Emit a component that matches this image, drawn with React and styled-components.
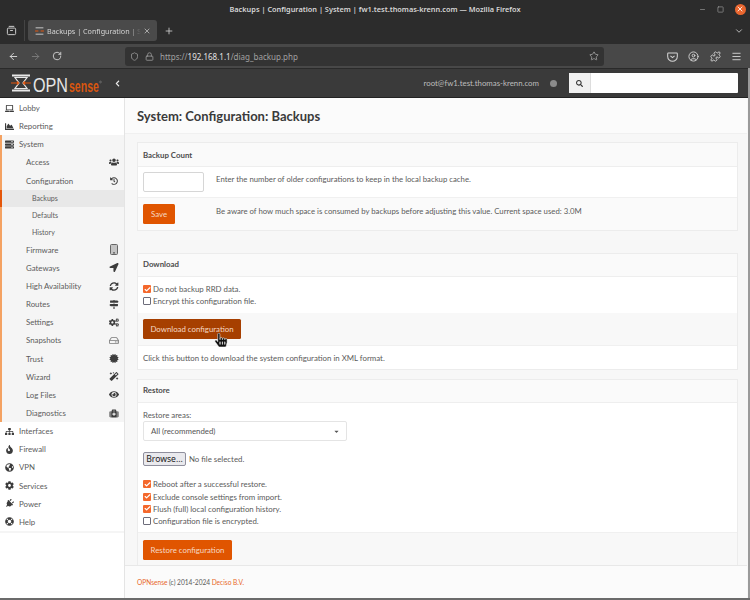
import styled, { createGlobalStyle } from "styled-components";
import {
  ArrowLeft,
  ArrowRight,
  RotateCw,
  Shield,
  Lock,
  Star,
  Menu,
  Puzzle,
  CircleUser,
  Plus,
  X,
  ChevronDown,
  Minus,
  Square,
  Check,
} from "lucide-react";
import {
  FaLaptop,
  FaChartArea,
  FaServer,
  FaUsers,
  FaHistory,
  FaTabletAlt,
  FaLocationArrow,
  FaSyncAlt,
  FaMapSigns,
  FaCogs,
  FaRegHdd,
  FaCertificate,
  FaMagic,
  FaEye,
  FaMedkit,
  FaSitemap,
  FaFire,
  FaGlobeAmericas,
  FaCog,
  FaPlug,
  FaLifeRing,
  FaSearch,
  FaChevronLeft,
  FaCaretDown,
  FaHandPointer,
} from "react-icons/fa";

const GlobalStyle = createGlobalStyle`
  html, body {
    margin: 0;
    width: 750px;
    height: 600px;
    overflow: hidden;
    background: #fff;
  }
  * {
    box-sizing: border-box;
  }
`;

const SANS = `"Lato", "Noto Sans", sans-serif`;
const CHROME = `"Noto Sans", "Open Sans", sans-serif`;

const Window = styled.div`
  width: 750px;
  height: 600px;
  display: flex;
  flex-direction: column;
  position: relative;
  overflow: hidden;
  font-family: ${SANS};
  border-bottom: 2px solid #6b6b6b;
`;

const TitleBar = styled.div`
  height: 20px;
  padding-bottom: 2px;
  background: #2c2c2c;
  color: #d6d6d6;
  font-family: ${CHROME};
  font-size: 7.35px;
  font-weight: 600;
  display: flex;
  align-items: center;
  justify-content: center;
  position: relative;
`;

const WindowButtons = styled.div`
  position: absolute;
  right: 4.5px;
  top: 0;
  height: 18px;
  display: flex;
  align-items: center;
  gap: 11px;
  color: #a8a8a8;
`;

const CloseDot = styled.span`
  width: 11px;
  height: 11px;
  border-radius: 50%;
  background: #e9662f;
  color: #fff;
  display: flex;
  align-items: center;
  justify-content: center;
`;

const TabStrip = styled.div`
  height: 24px;
  background: #2c2c2c;
  display: flex;
  align-items: flex-start;
  padding-left: 6px;
  color: #d0d0d0;
`;

const TabOverview = styled.div`
  width: 19px;
  height: 21px;
  display: flex;
  align-items: center;
  border-right: 1px solid #444;
  margin-right: 3px;
`;

const Tab = styled.div`
  width: 129px;
  height: 21px;
  background: #4a4a4a;
  border-radius: 3px;
  display: flex;
  align-items: center;
  padding: 0 6px;
  gap: 2px;
  font-family: ${CHROME};
  font-size: 7.2px;
  color: #d4d4d4;
  white-space: nowrap;
`;

const TabLabel = styled.span`
  flex: 1;
  overflow: hidden;
  mask-image: linear-gradient(to right, #000 88%, transparent);
`;

const NewTab = styled.div`
  width: 24px;
  height: 21px;
  display: flex;
  align-items: center;
  justify-content: center;
`;

const TabEnd = styled.div`
  margin-left: auto;
  width: 22px;
  height: 21px;
  display: flex;
  align-items: center;
  justify-content: center;
`;

const Toolbar = styled.div`
  height: 24px;
  background: #484848;
  display: flex;
  align-items: center;
  color: #d4d4d4;
  padding-left: 8px;
`;

const NavButton = styled.span`
  width: 22px;
  display: flex;
  align-items: center;
  color: ${(p) => (p.$off ? "#7d7d7d" : "#dcdcdc")};
`;

const UrlBar = styled.div`
  width: 479px;
  height: 19px;
  margin-left: 51px;
  background: #333333;
  border-radius: 3px;
  display: flex;
  align-items: center;
  padding: 0 5px;
  gap: 6px;
  font-family: ${CHROME};
  font-size: 8px;
  color: #a2a2a2;
`;

const UrlText = styled.span`
  flex: 1;
  b {
    font-weight: 400;
    color: #e2e2e2;
  }
`;

const ToolIcons = styled.div`
  margin-left: 63px;
  display: flex;
  align-items: center;
  gap: 10.4px;
`;

const AppHeader = styled.div`
  height: 30px;
  background: #3a3a3a;
  border-top: 1px solid #2a2a2a;
  border-bottom: 1px solid #222;
  display: flex;
  align-items: center;
  padding-left: 11px;
  color: #d0d0d0;
`;

const UserName = styled.span`
  margin-left: auto;
  font-size: 7.85px;
  color: #bdbdbd;
`;

const StatusDot = styled.span`
  width: 7px;
  height: 7px;
  border-radius: 50%;
  background: #8c8c8c;
  margin: 0 12px 0 11px;
`;

const SearchBox = styled.div`
  width: 169px;
  height: 20px;
  margin-right: 12px;
  background: #fff;
  display: flex;
  border-radius: 1px;
`;

const SearchAddon = styled.span`
  width: 22px;
  background: #f0f0f0;
  border-right: 1px solid #ddd;
  color: #333;
  display: flex;
  align-items: center;
  justify-content: center;
`;

const CollapseButton = styled.span`
  margin-left: 13px;
  display: flex;
  color: #eee;
`;

const Body = styled.div`
  flex: 1;
  min-height: 0;
  display: flex;
`;

const Sidebar = styled.nav`
  width: 125px;
  background: #fff;
  border-right: 1px solid #e4e4e4;
  padding-top: 1px;
  font-size: 7.85px;
  color: #5c5c5c;
`;

const Section = styled.div`
  background: #f5f5f5;
  border-left: 2px solid #f4a262;
`;

const TopItem = styled.div`
  height: 18.15px;
  display: flex;
  align-items: center;
  padding-left: 5px;
  gap: 5px;
  margin-left: ${(p) => (p.$inSection ? "-2px" : 0)};
  svg {
    color: #3c3c3c;
    width: 9px;
    flex: none;
  }
`;

const SubItem = styled.div`
  height: 18.15px;
  display: flex;
  align-items: center;
  padding: 0 5px 0 24px;
  justify-content: space-between;
  svg {
    color: #3c3c3c;
    width: 10px;
  }
`;

const LeafItem = styled.div`
  height: 17px;
  display: flex;
  align-items: center;
  padding-left: 30px;
  font-size: 7.05px;
  margin-left: ${(p) => (p.$active ? "-2px" : 0)};
  background: ${(p) => (p.$active ? "#e8e8e8" : "transparent")};
  border-left: ${(p) => (p.$active ? "2px solid #e4560a" : "none")};
`;

const SidebarEnd = styled.div`
  height: 2px;
  background: #f5f5f5;
`;

const TiltedPlug = styled(FaPlug)`
  transform: rotate(45deg);
`;

const FirmwareGlyph = styled.svg`
  ${SubItem} & {
    width: 8px;
    height: 11px;
    margin-right: 1px;
  }
`;

const FirmwareIcon = () => (
  <FirmwareGlyph viewBox="0 0 8 11">
    <rect x="0.5" y="0.5" width="7" height="10" rx="1" fill="#c4c4c4" stroke="#666" strokeWidth="1" />
    <rect x="3" y="8.4" width="2" height="1" fill="#444" />
  </FirmwareGlyph>
);

const SnapshotIcon = styled(FaRegHdd)`
  ${SubItem} & {
    color: #7a7a7a;
  }
`;

const Main = styled.main`
  flex: 1;
  min-width: 0;
  display: flex;
  flex-direction: column;
  background: #f7f7f7;
  padding-right: 3px;
`;

const PageTitle = styled.h1`
  margin: 0;
  height: 36px;
  background: #fbfbfb;
  border-bottom: 1px solid #f0f0f0;
  padding-left: 12px;
  display: flex;
  align-items: center;
  font-size: 13px;
  font-weight: 700;
  color: #3a3a3a;
`;

const Content = styled.div`
  flex: 1;
  min-height: 0;
  overflow: hidden;
  padding: 8px 9px 0 12px;
`;

const Card = styled.section`
  background: #fff;
  border: 1px solid #ececec;
  margin-bottom: ${(p) => p.$gap}px;
  font-size: 7.85px;
  color: #5a5a5a;
`;

const CardHeader = styled.div`
  height: ${(p) => p.$h}px;
  padding: 0 0 ${(p) => (p.$h < 24 ? 2 : 0)}px 5px;
  display: flex;
  align-items: center;
  background: #fafafa;
  border-bottom: 1px solid #eee;
  font-weight: 700;
  color: #4c4c4c;
`;

const Row = styled.div`
  height: ${(p) => p.$h}px;
  display: grid;
  grid-template-columns: 73px 1fr;
  align-items: center;
  padding-left: 5px;
  background: ${(p) => (p.$shade ? "#fafafa" : "#fff")};
  border-bottom: ${(p) => (p.$last ? "none" : "1px solid #f0f0f0")};
`;

const RowNote = styled.span`
  align-self: start;
  padding-top: ${(p) => p.$top}px;
  font-size: 7.78px;
`;

const ButtonRow = styled.div`
  height: ${(p) => p.$h}px;
  display: flex;
  align-items: center;
  padding-left: 5px;
  background: ${(p) => (p.$shade ? "#f8f8f8" : "#fff")};
  border-bottom: ${(p) => (p.$last ? "none" : "1px solid #f0f0f0")};
`;

const NumberInput = styled.div`
  width: 61px;
  height: 20px;
  background: #fff;
  border: 1px solid #d6d6d6;
  border-radius: 2px;
`;

const OrangeButton = styled.button`
  height: 20px;
  width: ${(p) => p.$w}px;
  padding: 0;
  border: none;
  border-radius: 1.5px;
  background: ${(p) => (p.$pressed ? "#a63f00" : "#e05500")};
  color: #f6d9c4;
  font-family: ${SANS};
  font-size: 7.85px;
`;

const CheckList = styled.div`
  padding: ${(p) => p.$pad};
  display: flex;
  flex-direction: column;
  gap: 4.3px;
`;

const CheckLine = styled.div`
  display: flex;
  align-items: center;
  gap: 2px;
  height: 8px;
`;

const CheckBox = styled.span`
  width: 8px;
  height: 8px;
  flex: none;
  border-radius: 1px;
  display: flex;
  align-items: center;
  justify-content: center;
  color: #fff;
  background: ${(p) => (p.$on ? "#f4682c" : "#fff")};
  border: ${(p) => (p.$on ? "none" : "1px solid #6c6c7a")};
`;

const RestoreBody = styled.div`
  padding: 5px 5px 7.2px;
  border-bottom: 1px solid #f0f0f0;
`;

const FieldLabel = styled.div`
  height: 14px;
  display: flex;
  align-items: center;
`;

const SelectBox = styled.div`
  width: 204px;
  height: 20px;
  margin-top: -1px;
  background: #fff;
  border: 1px solid #e4e4e4;
  border-radius: 2px;
  display: flex;
  align-items: center;
  justify-content: space-between;
  padding: 0 6px 0 7px;
  color: #555;
`;

const FileRow = styled.div`
  display: flex;
  align-items: center;
  gap: 3px;
  margin-top: 11px;
`;

const BrowseButton = styled.span`
  width: 43px;
  height: 14px;
  background: #e9e9ed;
  border: 1px solid #8f8f9d;
  border-radius: 2px;
  color: #222;
  font-family: "Noto Sans", sans-serif;
  font-size: 8.6px;
  display: flex;
  align-items: center;
  justify-content: center;
`;

const Footer = styled.footer`
  height: 33px;
  background: #fbfbfb;
  border-top: 1px solid #e8e8e8;
  padding-left: 12px;
  display: flex;
  align-items: center;
  gap: 1.5px;
  font-size: 6.6px;
  color: #5a5a5a;
`;

const FooterLink = styled.span`
  color: #e8692a;
`;

const ScrollThumb = styled.div`
  position: absolute;
  right: 0;
  top: 68px;
  width: 2px;
  height: 530px;
  background: #9a9a9a;
`;

const PointerCursor = styled.div`
  position: absolute;
  left: 214px;
  top: 333px;
  display: flex;
  color: #111;
  svg {
    stroke: #fff;
    stroke-width: 20px;
  }
`;

const LogoMark = styled.svg`
  overflow: visible;
  flex: none;
`;

const Logo = () => (
  <LogoMark width="90" height="20" viewBox="0 0 90 20">
    <path d="M1 1.5h18v2H1zM1 16.5h18v2H1z" fill="#e8e8e8" />
    <path d="M4 4.5h12l-4 5.5 4 5.5H4l4-5.5z" fill="none" stroke="#e8e8e8" strokeWidth="1.2" />
    <path d="M0 9.4h6.5v1.2H0zM13.5 9.4H20v1.2h-6.5z" fill="#e2560e" />
    <path d="M8.5 10l-2.6-2.2v4.4zM11.5 10l2.6-2.2v4.4z" fill="#e2560e" />
    <text transform="translate(22 18.5) scale(0.77 1)" fontFamily="'Liberation Sans', sans-serif" fontSize="21" fill="#e6e6e6">OPN</text>
    <text transform="translate(58 18.5) scale(0.62 1)" fontFamily="'Liberation Sans', sans-serif" fontSize="17" fontWeight="700" fill="#d9560f">sense</text>
    <circle cx="89.5" cy="9" r="0.9" fill="none" stroke="#a0a0a0" strokeWidth="0.4" />
  </LogoMark>
);

const TabFavicon = () => (
  <svg width="11" height="10" viewBox="0 0 18 18" style={{ flex: "none" }}>
    <path d="M2 2h14v2.4H2zM2 13.6h14V16H2z" fill="#9c9c9c" />
    <path d="M1 8.3h6v1.6H1zM11 8.3h6v1.6h-6z" fill="#e2560e" />
  </svg>
);

const TabsIcon = () => (
  <svg width="11" height="11" viewBox="0 0 16 16" fill="none" stroke="#d0d0d0" strokeWidth="1.4">
    <rect x="2" y="4.5" width="12" height="9.5" rx="1.5" />
    <path d="M4 2h8" />
    <path d="M6 8h4" />
  </svg>
);

const PocketIcon = () => (
  <svg width="11" height="11" viewBox="0 0 16 16" fill="none" stroke="#d4d4d4" strokeWidth="1.5">
    <path d="M2 3h12a1 1 0 0 1 1 1v4a7 7 0 0 1-14 0V4a1 1 0 0 1 1-1z" />
    <path d="M5 7l3 2.6L11 7" />
  </svg>
);

const Checked = ({ label }) => (
  <CheckLine>
    <CheckBox $on>
      <Check size={7} strokeWidth={4} />
    </CheckBox>
    {label}
  </CheckLine>
);

const Unchecked = ({ label }) => (
  <CheckLine>
    <CheckBox />
    {label}
  </CheckLine>
);

const systemItems = [
  ["Firmware", FirmwareIcon],
  ["Gateways", FaLocationArrow],
  ["High Availability", FaSyncAlt],
  ["Routes", FaMapSigns],
  ["Settings", FaCogs],
  ["Snapshots", SnapshotIcon],
  ["Trust", FaCertificate],
  ["Wizard", FaMagic],
  ["Log Files", FaEye],
  ["Diagnostics", FaMedkit],
];

const lowerItems = [
  ["Interfaces", FaSitemap],
  ["Firewall", FaFire],
  ["VPN", FaGlobeAmericas],
  ["Services", FaCog],
  ["Power", TiltedPlug],
  ["Help", FaLifeRing],
];

const App = () => {
  return (
    <>
      <GlobalStyle />
      <Window>
        <TitleBar>
          Backups | Configuration | System | fw1.test.thomas-krenn.com — Mozilla Firefox
          <WindowButtons>
            <Minus size={7} />
            <Square size={7} />
            <CloseDot>
              <X size={8} strokeWidth={2.5} />
            </CloseDot>
          </WindowButtons>
        </TitleBar>
        <TabStrip>
          <TabOverview>
            <TabsIcon />
          </TabOverview>
          <Tab>
            <TabFavicon />
            <TabLabel>Backups | Configuration | System</TabLabel>
            <X size={8} />
          </Tab>
          <NewTab>
            <Plus size={10} />
          </NewTab>
          <TabEnd>
            <ChevronDown size={10} />
          </TabEnd>
        </TabStrip>
        <Toolbar>
          <NavButton>
            <ArrowLeft size={11} />
          </NavButton>
          <NavButton $off>
            <ArrowRight size={11} />
          </NavButton>
          <NavButton>
            <RotateCw size={10} />
          </NavButton>
          <UrlBar>
            <Shield size={9} />
            <Lock size={9} />
            <UrlText>
              https://<b>192.168.1.1</b>/diag_backup.php
            </UrlText>
            <Star size={10} />
          </UrlBar>
          <ToolIcons>
            <PocketIcon />
            <CircleUser size={11} />
            <Puzzle size={11} />
            <Menu size={11} />
          </ToolIcons>
        </Toolbar>
        <AppHeader>
          <Logo />
          <CollapseButton>
            <FaChevronLeft size={7} />
          </CollapseButton>
          <UserName>root@fw1.test.thomas-krenn.com</UserName>
          <StatusDot />
          <SearchBox>
            <SearchAddon>
              <FaSearch size={7} />
            </SearchAddon>
          </SearchBox>
        </AppHeader>
        <Body>
          <Sidebar>
            <TopItem>
              <FaLaptop size={9} />
              Lobby
            </TopItem>
            <TopItem>
              <FaChartArea size={9} />
              Reporting
            </TopItem>
            <Section>
              <TopItem $inSection>
                <FaServer size={9} />
                System
              </TopItem>
              <SubItem>
                Access
                <FaUsers size={10} />
              </SubItem>
              <SubItem>
                Configuration
                <FaHistory size={8} />
              </SubItem>
              <LeafItem $active>Backups</LeafItem>
              <LeafItem>Defaults</LeafItem>
              <LeafItem>History</LeafItem>
              {systemItems.map(([label, Icon]) => (
                <SubItem key={label}>
                  {label}
                  <Icon size={9} />
                </SubItem>
              ))}
            </Section>
            {lowerItems.map(([label, Icon]) => (
              <TopItem key={label}>
                <Icon size={9} />
                {label}
              </TopItem>
            ))}
            <SidebarEnd />
          </Sidebar>
          <Main>
            <PageTitle>System: Configuration: Backups</PageTitle>
            <Content>
              <Card $gap={22}>
                <CardHeader $h={24}>Backup Count</CardHeader>
                <Row $h={31}>
                  <NumberInput />
                  <RowNote $top={7}>
                    Enter the number of older configurations to keep in the local backup cache.
                  </RowNote>
                </Row>
                <Row $h={32} $shade $last>
                  <OrangeButton $w={32}>Save</OrangeButton>
                  <RowNote $top={8}>
                    Be aware of how much space is consumed by backups before adjusting this value. Current space used: 3.0M
                  </RowNote>
                </Row>
              </Card>
              <Card $gap={9}>
                <CardHeader $h={23}>Download</CardHeader>
                <CheckList $pad="8px 5px 8px">
                  <Checked label="Do not backup RRD data." />
                  <Unchecked label="Encrypt this configuration file." />
                </CheckList>
                <ButtonRow $h={33} $shade>
                  <OrangeButton $w={98} $pressed>Download configuration</OrangeButton>
                </ButtonRow>
                <ButtonRow $h={23} $last>
                  Click this button to download the system configuration in XML format.
                </ButtonRow>
              </Card>
              <Card $gap={0}>
                <CardHeader $h={23}>Restore</CardHeader>
                <RestoreBody>
                  <FieldLabel>Restore areas:</FieldLabel>
                  <SelectBox>
                    All (recommended)
                    <FaCaretDown size={7} />
                  </SelectBox>
                  <FileRow>
                    <BrowseButton>Browse...</BrowseButton>
                    No file selected.
                  </FileRow>
                  <CheckList $pad="14px 0 0">
                    <Checked label="Reboot after a successful restore." />
                    <Checked label="Exclude console settings from import." />
                    <Checked label="Flush (full) local configuration history." />
                    <Unchecked label="Configuration file is encrypted." />
                  </CheckList>
                </RestoreBody>
                <ButtonRow $h={33} $shade $last>
                  <OrangeButton $w={89}>Restore configuration</OrangeButton>
                </ButtonRow>
              </Card>
            </Content>
            <Footer>
              <FooterLink>OPNsense</FooterLink> (c) 2014-2024 <FooterLink>Deciso B.V.</FooterLink>
            </Footer>
          </Main>
        </Body>
        <ScrollThumb />
        <PointerCursor>
          <FaHandPointer size={14} />
        </PointerCursor>
      </Window>
    </>
  );
};

export default App;
